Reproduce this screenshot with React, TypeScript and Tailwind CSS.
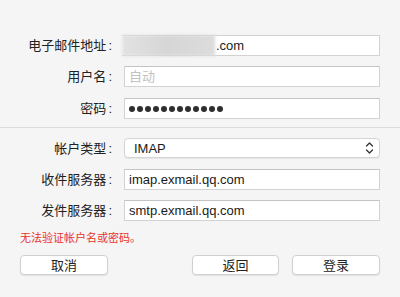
import React from "react";

const font = { fontFamily: '"Liberation Sans", "Noto Sans CJK SC", sans-serif' };

function Label({ children }: { children: React.ReactNode }) {
  return (
    <div className="w-[92px] shrink-0 text-right text-[13px] leading-none text-[#222]">
      {children}
      <span className="ml-[2px]">:</span>
    </div>
  );
}

function Field({ children }: { children?: React.ReactNode }) {
  return (
    <div className="ml-[12px] flex h-[21px] w-[256px] items-center border border-[#d2d2d2] border-t-[#c4c4c4] bg-white px-[4px] text-[13px] leading-none text-[#1a1a1a]">
      {children}
    </div>
  );
}

function Btn({ children, w }: { children: React.ReactNode; w: string }) {
  return (
    <div
      className={`${w} flex h-[20px] items-center justify-center rounded-[4px] border border-[#d0d0d0] bg-white text-[13px] leading-none text-[#222] shadow-[0_1px_1px_rgba(0,0,0,0.08)]`}
    >
      {children}
    </div>
  );
}

export default function App() {
  return (
    <div style={font} className="h-[297px] w-[400px] overflow-hidden bg-[#f5f5f5]">
      <div className="flex flex-col px-[20px] pt-[35px]">
        <div className="flex items-center">
          <Label>电子邮件地址</Label>
          <div className="ml-[10px] flex h-[21px] w-[258px] items-center border border-[#d2d2d2] border-l-0 bg-white text-[13px] leading-none text-[#1a1a1a]">
            <div className="h-[21px] w-[93px] bg-gradient-to-r from-[#e2e2e2] via-[#d6d6d6] to-[#dcdcdc] blur-[1.5px]" />
            <span className="ml-[1px]">.com</span>
          </div>
        </div>
        <div className="mt-[10px] flex items-center">
          <Label>用户名</Label>
          <Field>
            <span className="text-[#c2c2c2]">自动</span>
          </Field>
        </div>
        <div className="mt-[11px] flex items-center">
          <Label>密码</Label>
          <Field>
            <div className="flex gap-[2px]">
              {Array.from({ length: 12 }).map((_, i) => (
                <span key={i} className="h-[6px] w-[6px] rounded-full bg-[#2e2e2e]" />
              ))}
            </div>
          </Field>
        </div>
      </div>
      <div className="mt-[8px] h-px w-full bg-[#dadada]" />
      <div className="flex flex-col px-[20px] pt-[10px]">
        <div className="flex items-center">
          <Label>帐户类型</Label>
          <div className="ml-[12px] flex h-[20px] w-[256px] items-center justify-between rounded-[4px] border border-[#d4d4d4] bg-white pl-[9px] pr-[5px] text-[13px] leading-none text-[#1a1a1a] shadow-[0_1px_1px_rgba(0,0,0,0.06)]">
            <span>IMAP</span>
            <svg width="9" height="14" viewBox="0 0 9 14" fill="none" stroke="#333" strokeWidth="1.3" strokeLinecap="round" strokeLinejoin="round">
              <path d="M1.5 5 L4.5 2 L7.5 5" />
              <path d="M1.5 9 L4.5 12 L7.5 9" />
            </svg>
          </div>
        </div>
        <div className="mt-[11px] flex items-center">
          <Label>收件服务器</Label>
          <Field>imap.exmail.qq.com</Field>
        </div>
        <div className="mt-[10px] flex items-center">
          <Label>发件服务器</Label>
          <Field>smtp.exmail.qq.com</Field>
        </div>
        <div className="mt-[12px] text-[11px] leading-none text-[#e8322c]">无法验证帐户名或密码。</div>
        <div className="mt-[11px] flex items-center">
          <Btn w="w-[88px]">取消</Btn>
          <div className="ml-auto" />
          <Btn w="w-[87px]">返回</Btn>
          <div className="w-[13px]" />
          <Btn w="w-[88px]">登录</Btn>
        </div>
      </div>
    </div>
  );
}
